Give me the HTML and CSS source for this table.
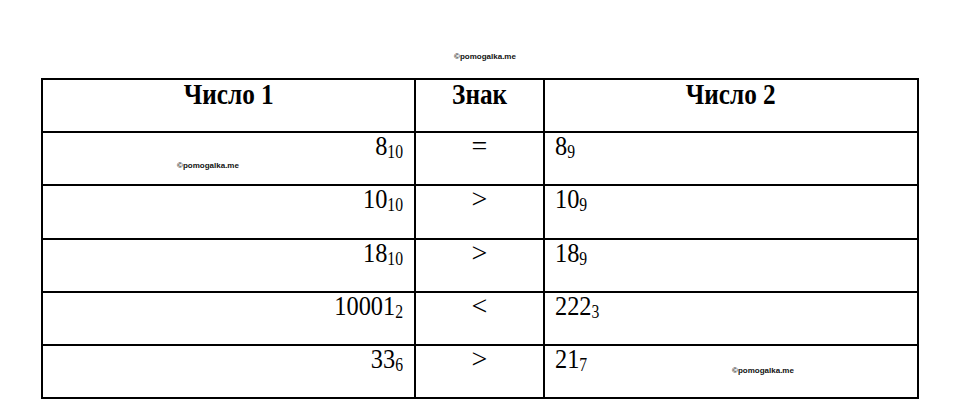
FILE: index.html
```html
<!DOCTYPE html>
<html>
<head>
<meta charset="utf-8">
<link rel="stylesheet" href="styles.css">
</head>
<body>
<div class="page">
  <div class="wm wm-top">©pomogalka.me</div>
  <table class="grid">
    <colgroup>
      <col class="c1"><col class="c2"><col class="c3">
    </colgroup>
    <tr class="head">
      <th><span class="hd">Число 1</span></th>
      <th><span class="hd">Знак</span></th>
      <th><span class="hd">Число 2</span></th>
    </tr>
    <tr>
      <td class="n1"><span class="num">8<sub>10</sub></span><span class="wm wm-cell1">©pomogalka.me</span></td>
      <td class="sg">=</td>
      <td class="n2"><span class="num">8<sub>9</sub></span></td>
    </tr>
    <tr>
      <td class="n1"><span class="num">10<sub>10</sub></span></td>
      <td class="sg">&gt;</td>
      <td class="n2"><span class="num">10<sub>9</sub></span></td>
    </tr>
    <tr>
      <td class="n1"><span class="num">18<sub>10</sub></span></td>
      <td class="sg">&gt;</td>
      <td class="n2"><span class="num">18<sub>9</sub></span></td>
    </tr>
    <tr>
      <td class="n1"><span class="num">10001<sub>2</sub></span></td>
      <td class="sg">&lt;</td>
      <td class="n2"><span class="num">222<sub>3</sub></span></td>
    </tr>
    <tr>
      <td class="n1"><span class="num">33<sub>6</sub></span></td>
      <td class="sg">&gt;</td>
      <td class="n2"><span class="num">21<sub>7</sub></span><span class="wm wm-cell3">©pomogalka.me</span></td>
    </tr>
  </table>
</div>
</body>
</html>
```

FILE: styles.css
```css
html, body {
  margin: 0;
  padding: 0;
  background: #fff;
}
.page {
  width: 960px;
  height: 416px;
  position: relative;
  padding-top: 78px;
  box-sizing: border-box;
  font-family: "Liberation Serif", "Times New Roman", serif;
  color: #000;
}
.wm {
  font-family: "Liberation Sans", Arial, sans-serif;
  font-weight: bold;
  font-size: 8px;
  color: #111;
  white-space: nowrap;
  line-height: 1;
}
.wm-top {
  position: absolute;
  left: 454px;
  top: 53px;
}
.grid {
  margin-left: 41px;
  border-collapse: collapse;
  table-layout: fixed;
  width: 876px;
}
.c1 { width: 373px; }
.c2 { width: 129px; }
.c3 { width: 374px; }
.grid th, .grid td {
  border: 2px solid #000;
  height: 53.2px;
  padding: 0;
  vertical-align: top;
  box-sizing: border-box;
}
.head th {
  font-weight: bold;
  font-size: 29px;
  line-height: 1;
  padding-top: 0;
  text-align: center;
}
.hd {
  display: inline-block;
  transform: scaleX(0.87);
  transform-origin: center top;
}
.grid td {
  font-size: 28px;
  line-height: 0.95;
  padding-top: 0;
  position: relative;
}
.num {
  display: inline-block;
  transform: scaleX(0.87);
}
.n1 {
  text-align: right;
  padding-right: 11px !important;
}
.n1 .num {
  transform-origin: right top;
}
.sg {
  text-align: center;
}
.n2 {
  text-align: left;
  padding-left: 10px !important;
}
.n2 .num {
  transform-origin: left top;
}
sub {
  font-size: 18px;
  vertical-align: -3px;
  line-height: 0;
}
.wm-cell1 {
  position: absolute;
  left: 134px;
  top: 29px;
}
.wm-cell3 {
  position: absolute;
  left: 187px;
  top: 21px;
}
```
